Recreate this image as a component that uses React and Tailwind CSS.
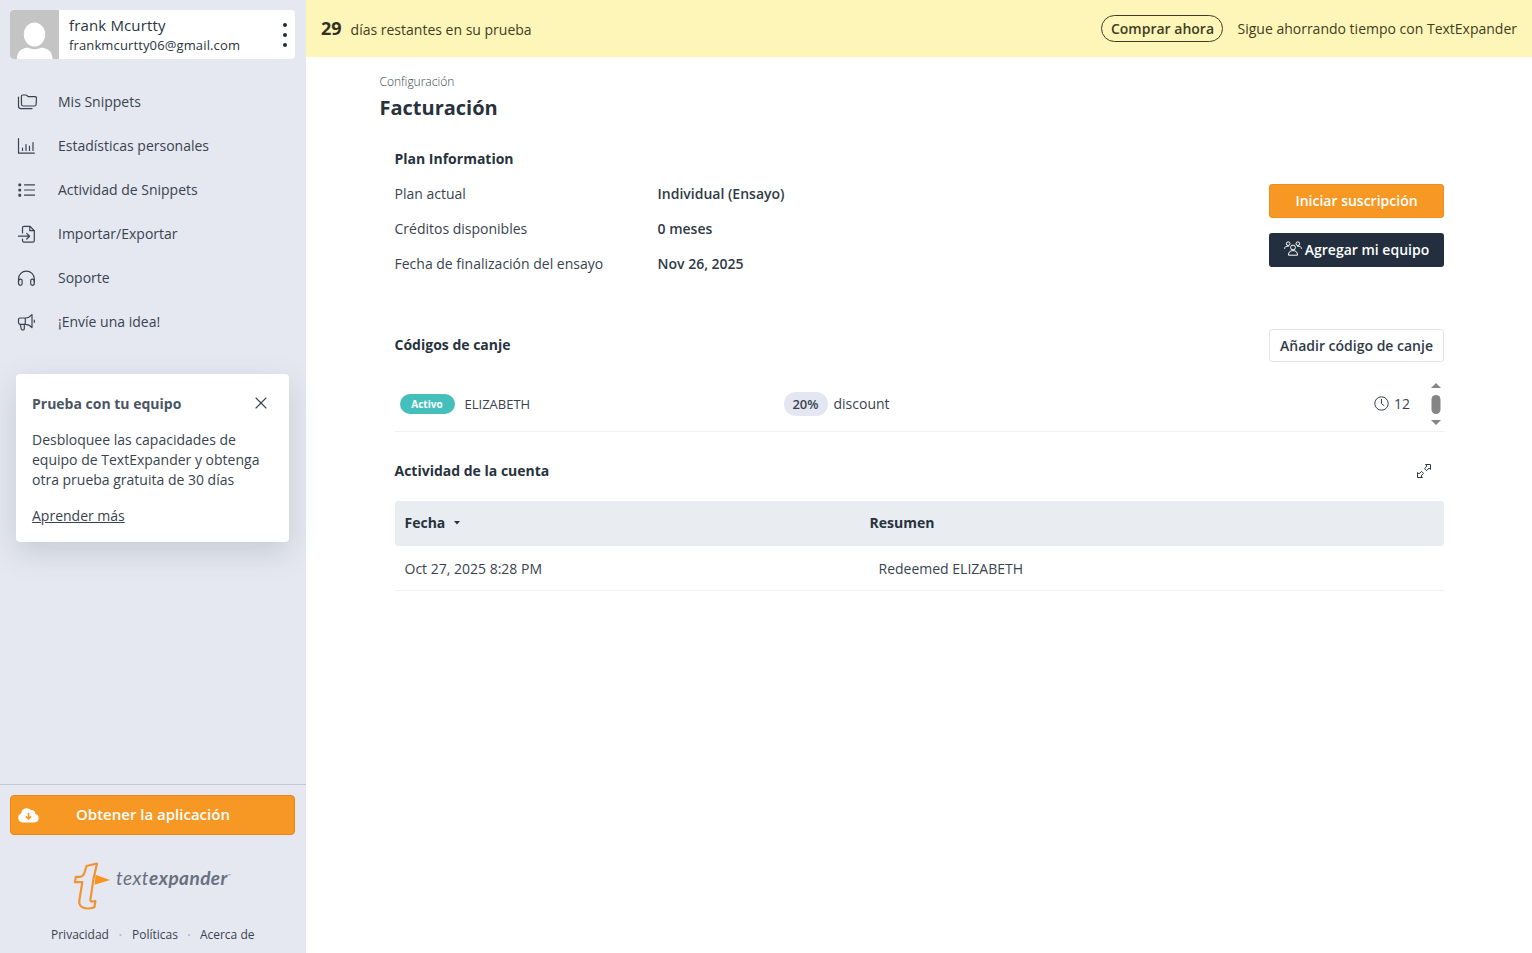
import React, { useState } from "react";

const Icon = ({ children, className = "", size = 20, strokeWidth = 1.2 }) => (
  <svg
    width={size}
    height={size}
    viewBox="0 0 20 20"
    fill="none"
    stroke="currentColor"
    strokeWidth={strokeWidth}
    strokeLinecap="round"
    strokeLinejoin="round"
    aria-hidden="true"
    className={`shrink-0 ${className}`}
  >
    {children}
  </svg>
);

const FoldersIcon = () => (
  <Icon>
    <path d="M4.400 4.300Q4.400 3 5.700 3h3q.7 0 1.200.5l1.200 1.200h6.900q1.500 0 1.500 1.500l-.4 6.300q-.1 1.500-1.600 1.500H6.300Q4.600 14 4.500 12.500Z" />
    <path d="M1.500 5v9.300q0 2.400 2.400 2.400H15" />
  </Icon>
);

const ChartIcon = () => (
  <Icon>
    <path d="M1.500 2.500v14.700h15.800" />
    <path d="M5.500 12v2.500M9 8.500v6M12.500 10v4.500M16 6.500v8" />
  </Icon>
);

const ListIcon = () => (
  <Icon>
    <path d="M7.500 4.800h10M7.500 10h10M7.500 15.200h10" />
    <path d="M2.200 4.300h1.100v1.100H2.200zM2.200 9.500h1.100v1.100H2.200zM2.200 14.700h1.100v1.100H2.200z" strokeWidth="1.700" />
  </Icon>
);

const ImportIcon = () => (
  <Icon>
    <path d="M5.500 9V3.800Q5.500 2.300 7 2.300h5.900l4.400 4.300v10q0 1.600-1.600 1.600H7.100q-1.600 0-1.600-1.600V15" />
    <path d="M12.800 2.500v4.200H17M1.500 12.200h11M9.700 9.400l2.900 2.800-2.900 2.800" />
  </Icon>
);

const HeadphonesIcon = () => (
  <Icon>
    <path d="M1.500 14v-3a7.900 7.900 0 0 1 15.800 0v3" />
    <path d="M3.500 11.200c1 0 1.600.4 1.600 1.400v3.200c0 1-.6 1.500-1.600 1.500s-2-.8-2-2.300v-1.500c0-1.400.9-2.300 2-2.300ZM15.300 11.200c-1 0-1.600.4-1.600 1.400v3.200c0 1 .6 1.500 1.600 1.500s2-.8 2-2.300v-1.500c0-1.400-.9-2.300-2-2.300Z" />
  </Icon>
);

const MegaphoneIcon = () => (
  <Icon>
    <path d="M8.800 6H3.300Q1.500 6 1.500 7.800v2.800q0 1.800 1.800 1.800h5.500c2 0 4.400 1.300 6.200 3.100V2.600C13.200 4.600 10.800 6 8.800 6ZM8.300 6v6.400M17.300 8v2.300" />
    <path d="m3.300 12.400.9 4.500q.2.900 1 .9h1.200q.9 0 .9-1v-4.400" />
  </Icon>
);

const navItems = [
  { label: "Mis Snippets", icon: FoldersIcon },
  { label: "Estadísticas personales", icon: ChartIcon },
  { label: "Actividad de Snippets", icon: ListIcon },
  { label: "Importar/Exportar", icon: ImportIcon },
  { label: "Soporte", icon: HeadphonesIcon },
  { label: "¡Envíe una idea!", icon: MegaphoneIcon },
];

const planRows = [
  { label: "Plan actual", value: "Individual (Ensayo)" },
  { label: "Créditos disponibles", value: "0 meses" },
  { label: "Fecha de finalización del ensayo", value: "Nov 26, 2025" },
];

const ProfileCard = () => (
  <div className="flex h-[49px] items-center overflow-hidden rounded bg-white">
    <svg width="49" height="49" viewBox="0 0 49 49" className="shrink-0" aria-hidden="true">
      <rect width="49" height="49" fill="#c4c4c4" />
      <ellipse cx="24.500" cy="24.500" rx="10.700" ry="12" fill="#fff" />
      <path d="M7 49c0-7 3.500-10 10-11.500q7.500 3.500 15 0C39 39 42.500 42 42.500 49Z" fill="#fff" />
    </svg>
    <div className="ml-2.5 min-w-0 flex-1 text-[#2b3440]">
      <div className="text-[15px] leading-[21px] tracking-[0.15px]">frank Mcurtty</div>
      <div className="text-[13px] leading-[18px] tracking-[0.13px]">frankmcurtty06@gmail.com</div>
    </div>
    <button aria-label="Menú" className="mr-2 flex flex-col gap-1.5 text-[#222b36]">
      <span className="size-1 rounded-full bg-current" />
      <span className="size-1 rounded-full bg-current" />
      <span className="size-1 rounded-full bg-current" />
    </button>
  </div>
);

const TeamTrialCard = ({ onClose }) => (
  <div className="mt-[30px] mr-[17px] ml-4 h-[168px] rounded bg-white px-4 pt-5 text-[14px] leading-5 text-[#39434f] shadow-[0_10px_30px_rgba(60,80,80,0.18)]">
    <div className="flex items-center justify-between pr-1.5">
      <h3 className="font-bold text-[#4a5563]">Prueba con tu equipo</h3>
      <button onClick={onClose} aria-label="Cerrar" className="pb-0.5 text-[#39434f]">
        <svg width="12" height="12" viewBox="0 0 12 12" fill="none" stroke="currentColor" strokeWidth="1.100" strokeLinecap="round">
          <path d="m1 1 10 10M11 1 1 11" />
        </svg>
      </button>
    </div>
    <p className="mt-4">
      Desbloquee las capacidades de equipo de TextExpander y obtenga otra prueba gratuita de 30 días
    </p>
    <a href="#" className="mt-4 inline-block underline">Aprender más</a>
  </div>
);

const Logo = () => (
  <div className="flex h-12 items-start pl-[73px]">
    <svg width="38" height="48" viewBox="0 0 38 50" preserveAspectRatio="none" fill="none" className="shrink-0" aria-hidden="true">
      <path
        d="M13.500 4.200 24 1.600 21.100 15h-.2l-3.400 23.500q-.5 3 2.200 2.600l2.700-.4-1 6.400c-8 2.900-16.400 1-15-7.300L9.300 21H1.900l1-5.500h3.900q3.800-.5 4.800-4.800Z"
        stroke="#f39232"
        strokeWidth="2.200"
        strokeLinejoin="round"
      />
      <path d="m22.500 13.200 14.500 5.500-15.300 5Z" fill="#f7941f" />
    </svg>
    <span className="mt-[4px] ml-[5px] font-['Lato'] text-[19px] leading-6 tracking-[0.45px] text-[#697080] italic">
      text<b className="font-bold">expander</b>
    </span>
    <span className="mt-[12px] text-[4px] leading-none text-[#697080]">™</span>
  </div>
);

const Sidebar = () => {
  const [showTrial, setShowTrial] = useState(true);

  return (
    <aside className="flex w-[306px] shrink-0 flex-col bg-[#e5e8f1] text-[#39434f]">
      <div className="pt-2.5 pr-[11px] pl-2.5">
        <ProfileCard />
      </div>
      <nav className="mt-[21px]">
        {navItems.map(({ label, icon: NavIcon }) => (
          <a key={label} href="#" className="flex h-11 items-center pl-[17px] text-[14px]">
            <NavIcon />
            <span className="ml-[21px] pb-0.5">{label}</span>
          </a>
        ))}
      </nav>
      {showTrial && <TeamTrialCard onClose={() => setShowTrial(false)} />}

      <div className="mt-auto h-[169px] border-t border-[#c3cad6] pt-2.5">
        <button className="ml-2.5 flex h-10 w-[285px] items-center rounded border border-[#e5861a] bg-[#f79824] pl-[7px] text-[15px] font-semibold text-white">
          <svg width="21" height="16" viewBox="0 0 21 16" aria-hidden="true">
            <path d="M17.300 6.900A3.500 3.500 0 0 0 13 3.100 5.600 5.600 0 0 0 3.200 6.500 4.600 4.600 0 0 0 4.700 15.400h11.700a4.300 4.300 0 0 0 .9-8.500Z" fill="#fff" />
            <path d="M10.500 5.800v6M7.800 9.300l2.700 2.600 2.700-2.600" fill="none" stroke="#f79824" strokeWidth="1.600" />
          </svg>
          <span className="ml-[37px] pb-0.5">Obtener la aplicación</span>
        </button>
        <div className="mt-[27px]">
          <Logo />
        </div>
        <div className="mt-[17px] flex pl-[51px] text-[12px] leading-4 text-[#39434f]">
          <a href="#">Privacidad</a>
          <span className="w-[23px] text-center font-bold text-[#b4bbc8]">·</span>
          <a href="#">Políticas</a>
          <span className="w-[22px] text-center font-bold text-[#b4bbc8]">·</span>
          <a href="#">Acerca de</a>
        </div>
      </div>
    </aside>
  );
};

const TrialBanner = () => (
  <div className="flex h-[57px] items-center bg-[#fef6b9] px-[15px] text-[14px] text-[#3f3d24]">
    <span className="text-[18px] font-bold text-[#33321f]">29</span>
    <span className="ml-[9px] pt-0.5">días restantes en su prueba</span>
    <button className="ml-auto h-[27px] w-[122px] rounded-full border border-[#3f3d24] text-center font-semibold">Comprar ahora</button>
    <span className="ml-3.5">Sigue ahorrando tiempo con TextExpander</span>
  </div>
);

const PlanInformation = () => (
  <section className="flex justify-between">
    <div className="text-[14px] leading-5">
      <h2 className="font-bold text-[#28323e]">Plan Information</h2>
      <dl className="mt-[15px] grid grid-cols-[263px_auto] gap-y-[15px]">
        {planRows.map((row) => (
          <React.Fragment key={row.label}>
            <dt>{row.label}</dt>
            <dd className="font-semibold text-[#303a46]">{row.value}</dd>
          </React.Fragment>
        ))}
      </dl>
    </div>
    <div className="flex w-[175px] flex-col gap-[15px] pt-[35px] text-[14px] font-semibold text-white">
      <button className="h-[34px] rounded-[3px] border border-[#ec8f20] bg-[#f79824] pb-0.5">Iniciar suscripción</button>
      <button className="flex h-[34px] items-center justify-center gap-[3px] rounded-[3px] bg-[#232f3f] pb-0.5">
        <svg width="18" height="16" viewBox="0 0 18 16" fill="none" stroke="currentColor" aria-hidden="true">
          <circle cx="4.200" cy="2.700" r="1.800" />
          <circle cx="13.800" cy="2.700" r="1.800" />
          <circle cx="9" cy="6.500" r="2.400" />
          <path d="M.600 7.800c0-2 1.200-2.700 4.300-2.700M17.400 7.800c0-2-1.200-2.700-4.300-2.700M4.500 14.200c0-3.200 1.600-4.600 4.500-4.600s4.500 1.400 4.500 4.600Z" />
        </svg>
        Agregar mi equipo
      </button>
    </div>
  </section>
);

const RedeemCodes = () => (
  <section className="mt-[55px]">
    <div className="flex h-[33px] items-center justify-between text-[14px]">
      <h2 className="pb-0.5 font-bold text-[#28323e]">Códigos de canje</h2>
      <button className="h-[33px] w-[175px] rounded-[3px] border border-[#e2e5ea] font-semibold text-[#303a46]">
        Añadir código de canje
      </button>
    </div>
    <div className="mt-4 flex h-[54px] items-center border-b border-[#f0f1f3] pb-px text-[14px]">
      <span className="ml-[5px] flex h-5 w-[55px] items-center justify-center rounded-full bg-[#45bfbb] text-[10px] font-bold text-white">
        Activo
      </span>
      <span className="ml-2.5 w-[319px] pt-0.5 text-[13px]">ELIZABETH</span>
      <span className="flex h-6 w-[44px] items-center justify-center rounded-full bg-[#e4e6f1] pt-px text-[13px] font-semibold">20%</span>
      <span className="ml-1.5 pb-px">discount</span>
      <span className="ml-auto flex items-center gap-[5px] pb-px">
        <svg width="15" height="15" viewBox="0 0 15 15" fill="none" stroke="currentColor" aria-hidden="true">
          <circle cx="7.500" cy="7.500" r="6.700" />
          <path d="M7.500 3v4.700l2.700 2" />
        </svg>
        12
      </span>
      {/* Scrollbar of the codes list */}
      <svg width="10" height="44" viewBox="0 0 10 44" className="mr-[3px] ml-[21px]" fill="#858585" aria-hidden="true">
        <path d="M5 .900 10 6H0ZM5 43 0 38h10Z" />
        <rect x=".500" y="13" width="9" height="19" rx="4.500" />
      </svg>
    </div>
  </section>
);

const AccountActivity = () => (
  <section className="mt-[29px] text-[14px] leading-5">
    <div className="flex items-center justify-between">
      <h2 className="font-bold text-[#28323e]">Actividad de la cuenta</h2>
      <svg width="16" height="16" viewBox="0 0 16 16" fill="none" stroke="#303a46" strokeLinejoin="round" className="mr-3" aria-hidden="true">
        <path d="M9.500 1.500h5v5l-1.500-1.300-2.600 2.400-1.900-1.900L10.900 3ZM6.500 14.500h-5v-5L3 10.800l2.600-2.400 1.900 1.900L5.100 13Z" />
      </svg>
    </div>
    <div className="mt-5 grid h-[45px] grid-cols-[465px_1fr] items-center rounded-[3px] bg-[#e9edf2] px-2.5 pb-px font-bold text-[#28323e]">
      <span className="flex items-center gap-[9px]">
        Fecha
        <svg width="6" height="4" viewBox="0 0 6 4" fill="#28323e" aria-hidden="true">
          <path d="M0 0h6L3 3.500Z" />
        </svg>
      </span>
      <span>Resumen</span>
    </div>
    <div className="grid h-[45px] grid-cols-[474px_1fr] items-center border-b border-[#f0f1f3] px-2.5 pt-0.5">
      <span>Oct 27, 2025 8:28 PM</span>
      <span>Redeemed ELIZABETH</span>
    </div>
  </section>
);

const App = () => (
  <div className="flex h-[953px] overflow-hidden bg-white font-['Open_Sans',sans-serif]">
    <Sidebar />
    <div className="min-w-0 flex-1">
      <TrialBanner />
      <main className="pr-[73px] pl-[73.5px] pt-4 text-[#39434f]">
        <div className="text-[12px] leading-[18px] font-light">Configuración</div>
        <h1 className="mt-[3px] text-[20px] leading-7 font-bold text-[#28323e]">Facturación</h1>
        <div className="mt-[27px] px-[15px]">
          <PlanInformation />
          <RedeemCodes />
          <AccountActivity />
        </div>
      </main>
    </div>
  </div>
);

export default App;
